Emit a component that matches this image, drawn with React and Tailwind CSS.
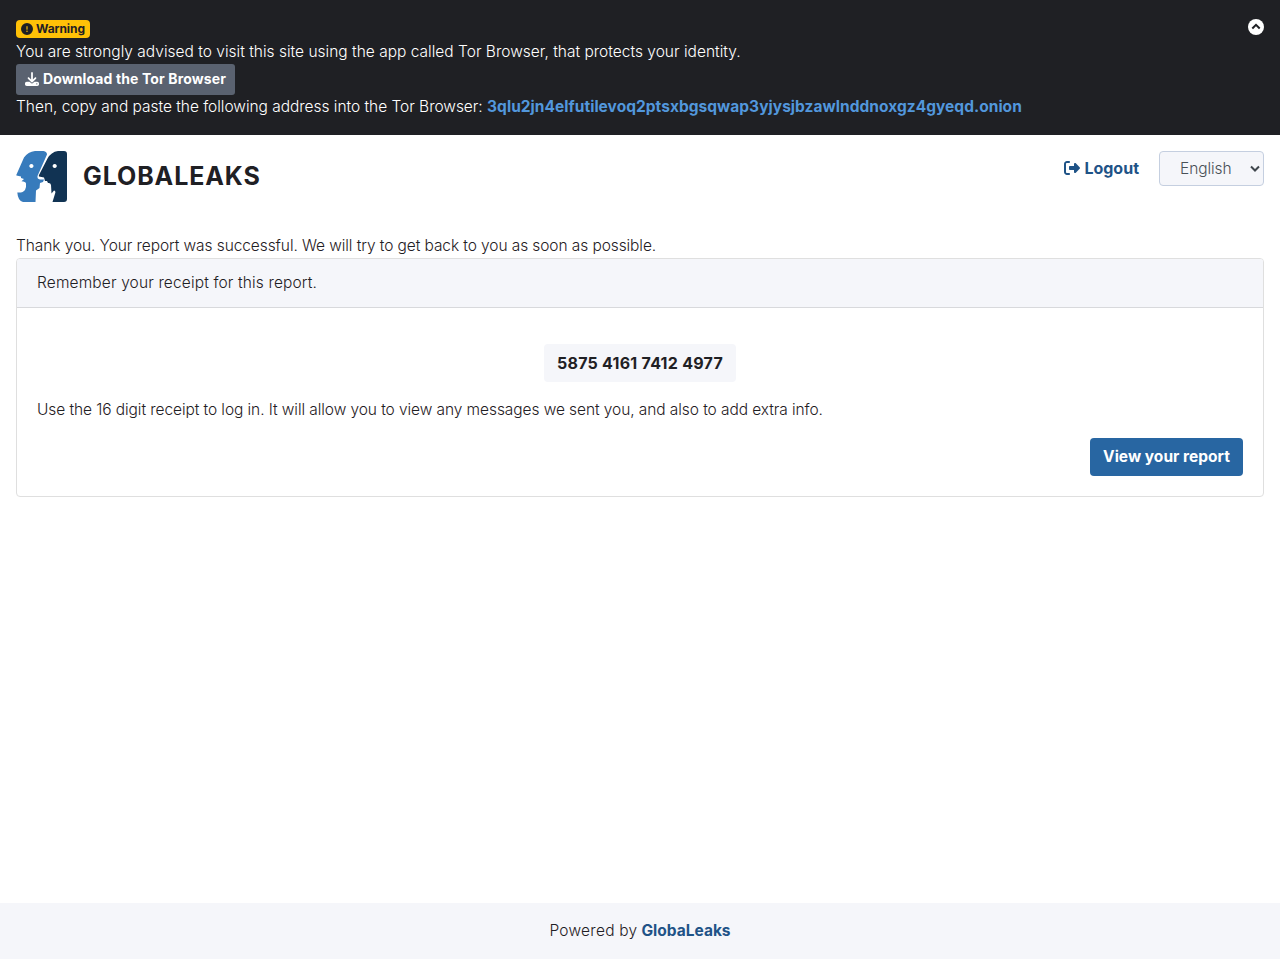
import { FaCircleExclamation, FaDownload, FaRightFromBracket } from "react-icons/fa6";

function Logo() {
  return (
    <svg className="size-[51px]" viewBox="0 0 51 51" aria-hidden="true">
      <path fill="#377bbc" fillRule="evenodd" d="M19 0H27.5Q31 .5 31 3.5L21.5 25Q21 28 24 28.5L28 28.5 27 31 24 32 23.5 37 20 39.5 19.5 51H7Q2 50 1.3 41.5 7 42 9 39 10.5 37 10 32.5 9.5 30.5 5.5 30.300L8 28 5 27 5 25.500.5 24.500Q0 24 .5 23.500L8 6.500Q12 .8 19 0ZM15.400 12.900a2.100 2.100 0 1 0 .001 0Z" />
      <path fill="#113353" fillRule="evenodd" d="M42 0H48Q51 0 51 3V48Q51 51 48 51H36.500L39.400 41.500Q39.500 39.500 38 39.500L35.500 42.500 35 34Q34.500 31.500 32 32L31 30 29 30 28 26.500 23 25.500Q22.500 25 23 24L31.500 7.500Q35 1 42 0ZM38.700 12.900a2.100 2.100 0 1 0 .001 0Z" />
    </svg>
  );
}

function CollapseIcon() {
  return (
    <svg className="mt-[3px] size-4" viewBox="0 0 16 16" fill="none" aria-hidden="true">
      <circle cx="8" cy="8" r="8" fill="#fff" />
      <path d="M4.300 9.500 8 5.800l3.700 3.700" stroke="#1f2024" strokeWidth="2" />
    </svg>
  );
}

function WarningBar() {
  return (
    <div className="flex justify-between bg-[#1f2024] p-4 text-white">
      <div className="flex flex-col items-start">
        <div className="flex h-6 items-center pt-[2px]">
          <span className="flex h-[18px] items-center gap-[3px] rounded-[4px] bg-[#ffc107] px-[5px] text-[12px] leading-none font-bold tracking-[-0.08px] text-[#1f2024]">
            <FaCircleExclamation className="size-3" />
            Warning
          </span>
        </div>
        <p className="h-6 leading-[23px] font-light tracking-[0.008px]">
          You are strongly advised to visit this site using the app called Tor Browser, that protects your identity.
        </p>
        <button className="flex h-[31px] items-center gap-1 rounded-[3px] bg-[#5a6270] px-[9px] pb-[2px] text-[14px] font-bold tracking-[0.12px] whitespace-nowrap">
          <FaDownload className="size-[14px]" />
          Download the Tor Browser
        </button>
        <p className="h-6 leading-[23px] font-light tracking-[-0.03px]">
          Then, copy and paste the following address into the Tor Browser:{" "}
          <a className="font-bold tracking-[0.035px] text-[#5297dc]">
            3qlu2jn4elfutilevoq2ptsxbgsqwap3yjysjbzawlnddnoxgz4gyeqd.onion
          </a>
        </p>
      </div>
      <CollapseIcon />
    </div>
  );
}

function Header() {
  return (
    <header className="flex justify-between p-4">
      <div className="flex items-center gap-4">
        <Logo />
        <h1 className="pb-[2px] text-[25px] font-bold tracking-[0.9px]">GLOBALEAKS</h1>
      </div>
      <div className="flex items-start gap-5">
        <a className="flex h-[35px] items-center gap-1 pb-[2px] text-[16px] font-bold text-[#1f5387]">
          <FaRightFromBracket className="size-4" />
          Logout
        </a>
        <div className="flex h-[35px] w-[105px] items-center justify-between rounded-[4px] border border-[#c5cfe0] bg-[#f5f6fa] pr-[3px] pl-5 font-light tracking-[-0.07px] text-[#495057]">
          <span>English</span>
          <svg className="h-[10px] w-[10px]" viewBox="0 0 10 10" fill="none" stroke="#3f464d" strokeWidth="2">
            <path d="M1 2.500 5 6.500 9 2.500" />
          </svg>
        </div>
      </div>
    </header>
  );
}

export default function App() {
  return (
    <div className="flex min-h-screen flex-col bg-white font-['Inter',sans-serif] text-[15.5px] leading-6 text-[#1f2024]">
      <WarningBar />
      <Header />
      <main className="grow px-4 pt-4">
        <p className="h-6 leading-[23px] font-light tracking-[-0.085px]">
          Thank you. Your report was successful. We will try to get back to you as soon as possible.
        </p>
        <section className="rounded-[4px] border border-[#dfdfdf]">
          <div className="flex h-[49px] items-center rounded-t-[3px] border-b border-[#d8d9dc] bg-[#f5f6fa] px-5 font-light tracking-[0.14px]">
            Remember your receipt for this report.
          </div>
          <div className="flex flex-col px-5 pt-9 pb-5">
            <div className="flex h-[38px] w-48 items-center justify-center self-center rounded-[4px] bg-[#f5f6fa] text-[16px] font-bold tracking-[0.25px]">
              5875 4161 7412 4977
            </div>
            <p className="mt-4 h-6 leading-[23px] font-light tracking-[-0.075px]">
              Use the 16 digit receipt to log in. It will allow you to view any messages we sent you, and also to add extra info.
            </p>
            <button className="mt-4 flex h-[38px] w-[153px] items-center justify-center self-end rounded-[4px] bg-[#2866a2] pb-px font-bold tracking-[0.02px] text-white">
              View your report
            </button>
          </div>
        </section>
      </main>
      <footer className="flex h-14 items-center justify-center gap-1 bg-[#f5f6fa] font-light">
        <span className="tracking-[0.25px]">Powered by</span>
        <a className="font-bold text-[#1f5387]">GlobaLeaks</a>
      </footer>
    </div>
  );
}
